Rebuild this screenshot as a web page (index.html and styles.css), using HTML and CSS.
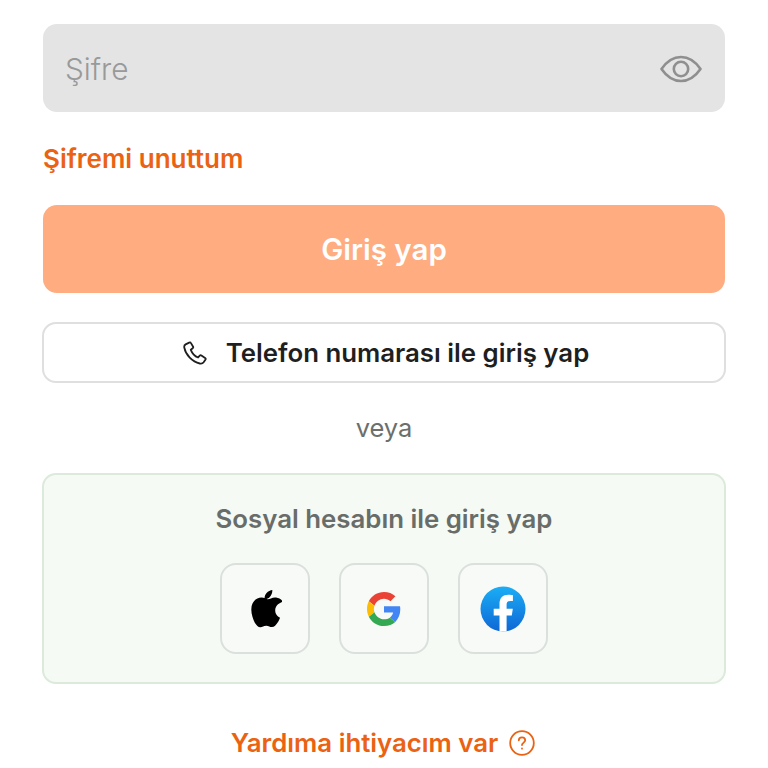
FILE: index.html
```html
<!DOCTYPE html>
<html lang="tr">
<head>
    <meta charset="utf-8">
    <link rel="stylesheet" href="styles.css">
</head>
<body>
    <div class="login">
        <div class="password-field">
            <span class="placeholder">Şifre</span>
            <svg class="eye" width="42" height="28" viewBox="0 0 42 28" fill="none" stroke="#8f8f8f" stroke-width="2.6">
                <path d="M1.5 14C7 6 13.5 2 21 2s14 4 19.5 12C35 22 28.5 26 21 26S7 22 1.5 14Z" stroke-linejoin="round"/>
                <circle cx="21" cy="14" r="7.2"/>
            </svg>
        </div>
        <a class="forgot">Şifremi unuttum</a>
        <button class="submit" type="submit">Giriş yap</button>
        <button class="phone" type="button">
            <svg width="24" height="24" viewBox="0 0 24 24" fill="none" stroke="#1f1f1f" stroke-width="1.8" stroke-linejoin="round" stroke-linecap="round">
                <path d="M6.2 1.6 2.6 3.4C1.4 4.1 1 5.300 1.300 6.700 2.600 13.900 9.300 21 16.800 22.500c1.700.3 3-.1 3.800-1.200l1.800-2.600c.4-.6.3-1.300-.3-1.700l-3.700-2.500c-.6-.4-1.200-.3-1.700.2l-1.600 1.800c-3.300-1.300-5.900-4.200-7.300-7.700l1.900-1.500c.5-.4.700-1 .4-1.600L8 2.100c-.3-.6-1.200-.8-1.800-.5Z"/>
            </svg>
            <span>Telefon numarası ile giriş yap</span>
        </button>
        <div class="or">veya</div>
        <div class="social">
            <h6 class="social-title">Sosyal hesabın ile giriş yap</h6>
            <div class="social-buttons">
                <button class="social-btn" type="button" aria-label="Apple">
                    <svg width="34" height="40" viewBox="0 0 34 40">
                        <path fill="#000" d="M24.300 0c.2 2.500-.7 4.700-2.100 6.400-1.500 1.800-3.600 2.900-5.600 2.700-.3-2.300.7-4.600 2-6.100C20.100 1.300 22.500.1 24.300 0ZM31.200 13.600c-.3.2-4 2.300-4 6.900 0 5.300 4.700 7.200 4.800 7.200 0 .1-.7 2.500-2.500 5-1.500 2.200-3.100 4.400-5.500 4.400s-3-1.400-5.800-1.400c-2.700 0-3.700 1.500-5.900 1.500s-3.700-2-5.500-4.500C5.200 29.700 3.300 24.500 3.300 19.600c0-7.900 5.100-12 10.100-12 2.700 0 4.900 1.700 6.500 1.700 1.600 0 4.100-1.800 7.100-1.800 1.100 0 5.200.1 7.900 4-.2.1 0 0-3.700 2.100Z" transform="translate(0 1)"/>
                    </svg>
                </button>
                <button class="social-btn" type="button" aria-label="Google">
                    <svg width="34" height="34" viewBox="0 0 48 48">
                        <path fill="#ea4335" d="M24 9.500c3.500 0 6.700 1.300 9.200 3.400l6.900-6.900C35.900 2.200 30.300 0 24 0 14.600 0 6.500 5.400 2.600 13.200l8 6.200C12.500 13.600 17.800 9.500 24 9.500Z"/>
                        <path fill="#4285f4" d="M47 24.500c0-1.600-.1-3.100-.4-4.500H24v9.100h12.900c-.6 3-2.200 5.400-4.700 7.100l7.700 6c4.500-4.200 7.100-10.300 7.100-17.700Z"/>
                        <path fill="#fbbc05" d="M10.500 28.600c-.5-1.400-.8-3-.8-4.600s.3-3.100.8-4.600l-8-6.200C.9 16.500 0 20.100 0 24s.9 7.500 2.600 10.800l7.900-6.200Z"/>
                        <path fill="#34a853" d="M24 48c6.500 0 11.900-2.100 15.900-5.800l-7.700-6c-2.100 1.400-4.900 2.300-8.200 2.300-6.200 0-11.500-4.200-13.400-9.900l-8 6.200C6.500 42.600 14.600 48 24 48Z"/>
                    </svg>
                </button>
                <button class="social-btn" type="button" aria-label="Facebook">
                    <svg width="46" height="46" viewBox="0 0 46 46">
                        <defs>
                            <linearGradient id="fb" x1="0" y1="0" x2="0" y2="1">
                                <stop offset="0" stop-color="#1aaef5"/>
                                <stop offset="1" stop-color="#0f67d6"/>
                            </linearGradient>
                        </defs>
                        <circle cx="23" cy="23" r="22.500" fill="url(#fb)"/>
                        <path fill="#fff" d="M19.500 45.500V29.400h-5.800v-6.600h5.800v-5c0-5.800 3.400-9 8.700-9 2.500 0 4.700.4 4.700.4v5.700h-2.700c-2.800 0-3.600 1.700-3.600 3.500v4.400h6.200l-1 6.600h-5.200v16.100h-7.100Z"/>
                    </svg>
                </button>
            </div>
        </div>
        <a class="help">
            <span>Yardıma ihtiyacım var</span>
            <svg width="26" height="26" viewBox="0 0 26 26" fill="none" stroke="#ea6212" stroke-width="1.800" stroke-linecap="round">
                <circle cx="13" cy="13" r="11.800"/>
                <path d="M9.800 10.300c0-1.800 1.400-3 3.200-3s3.200 1.200 3.200 2.900c0 2.300-3.200 2.500-3.200 4.800"/>
                <path d="M13 18.500v.2"/>
            </svg>
        </a>
    </div>
</body>
</html>
```

FILE: styles.css
```css
html, body {
    margin: 0;
    padding: 0;
    background: #fff;
    font-family: Inter, "Noto Sans", sans-serif;
}

button {
    font-family: inherit;
    padding: 0;
    cursor: pointer;
}

.login {
    display: flex;
    flex-direction: column;
    height: 768px;
    box-sizing: border-box;
    padding: 24px 42px 0 42px;
    overflow: hidden;
}

.password-field {
    display: flex;
    align-items: center;
    justify-content: space-between;
    flex: none;
    height: 88px;
    margin: 0 1px;
    padding: 2px 23px 0 22px;
    box-sizing: border-box;
    background: #e4e4e4;
    border-radius: 14px;
}

.placeholder {
    font-size: 29.800px;
    font-weight: 300;
    color: #999;
}

.forgot {
    margin: 32px 1px 0 1px;
    font-size: 26px;
    line-height: 30px;
    font-weight: 600;
    color: #ea6212;
}

.submit {
    flex: none;
    height: 88px;
    margin: 31px 1px 0 1px;
    border: 0;
    border-radius: 14px;
    background: #ffac80;
    color: #fff;
    font-size: 29.500px;
    font-weight: 600;
}

.phone {
    display: flex;
    align-items: center;
    justify-content: center;
    gap: 19px;
    flex: none;
    height: 61px;
    margin-top: 29px;
    padding-left: 4px;
    background: #fff;
    border: 2px solid #dfdfdf;
    border-radius: 14px;
    color: #1f1f1f;
    font-size: 25.800px;
    font-weight: 600;
}

.or {
    margin-top: 30px;
    text-align: center;
    font-size: 25.500px;
    line-height: 30px;
    color: #6c6f6c;
}

.social {
    flex: none;
    box-sizing: border-box;
    height: 211px;
    margin-top: 30px;
    padding-top: 29px;
    background: #f5faf5;
    border: 2px solid #dceadc;
    border-radius: 14px;
}

.social-title {
    margin: 0;
    text-align: center;
    font-size: 25.800px;
    line-height: 30px;
    font-weight: 600;
    color: #696d69;
}

.social-buttons {
    display: flex;
    justify-content: center;
    gap: 29px;
    margin-top: 29px;
}

.social-btn {
    display: flex;
    align-items: center;
    justify-content: center;
    box-sizing: border-box;
    width: 90px;
    height: 91px;
    background: #f8faf7;
    border: 2px solid #dce0dc;
    border-radius: 16px;
}

.help {
    display: flex;
    align-items: center;
    justify-content: center;
    gap: 11px;
    margin-top: 43px;
    padding-right: 2px;
    font-size: 25.800px;
    line-height: 32px;
    font-weight: 600;
    color: #ea6212;
}
```
